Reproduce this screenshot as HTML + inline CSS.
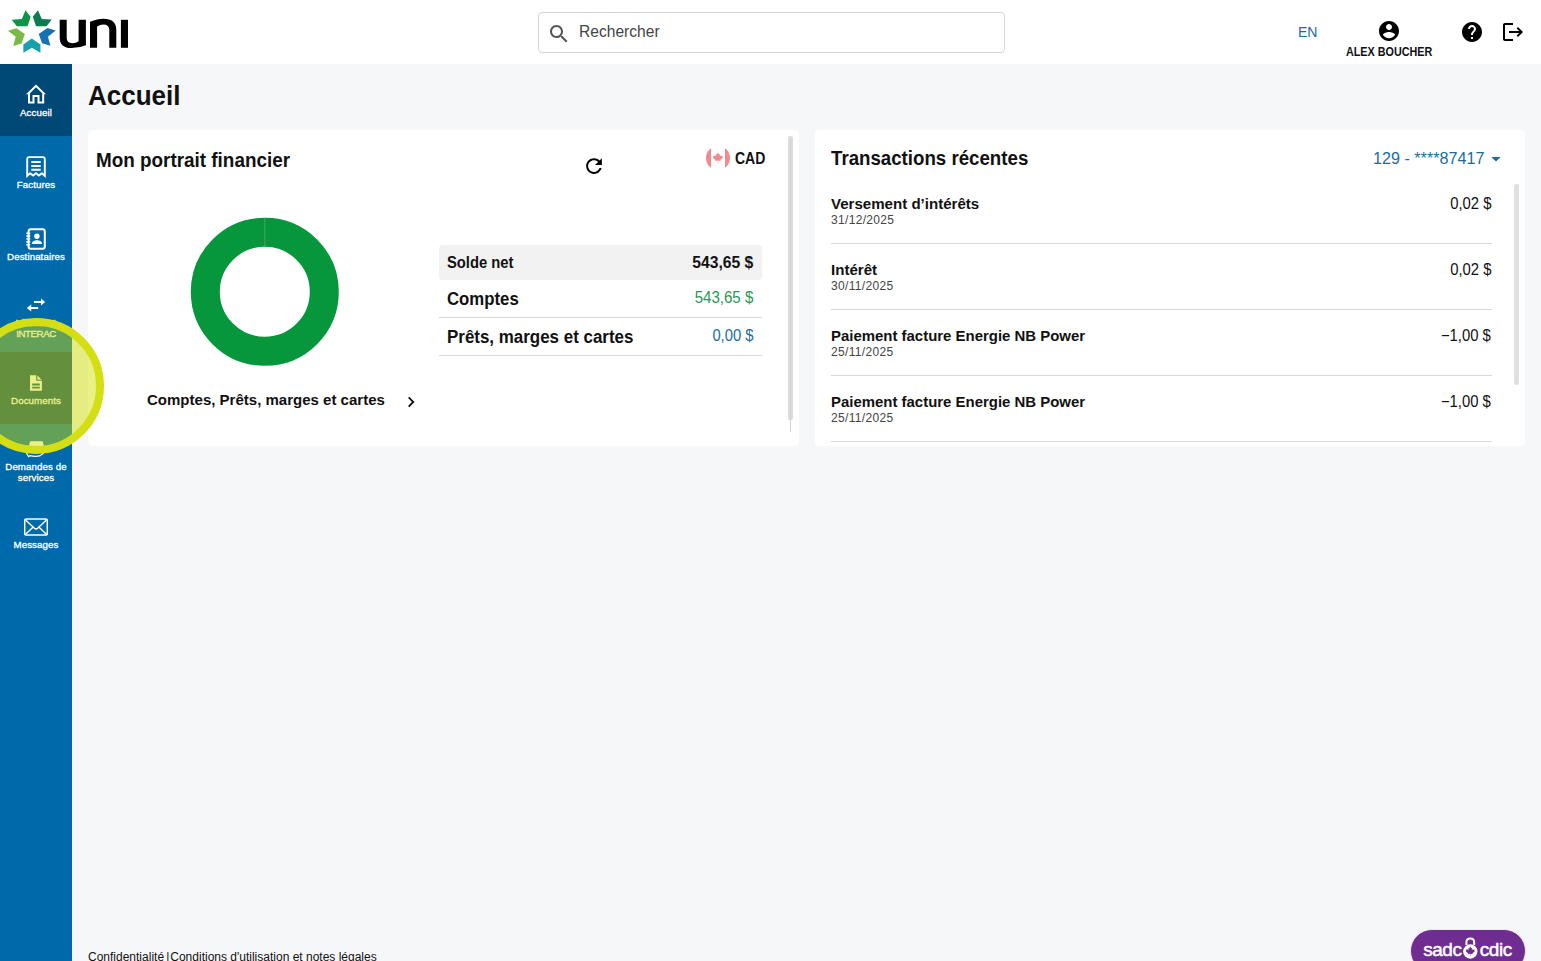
<!DOCTYPE html>
<html lang="fr">
<head>
<meta charset="utf-8">
<title>Accueil</title>
<style>
*{box-sizing:border-box;margin:0;padding:0}
html,body{width:1541px;height:961px;overflow:hidden;background:#f6f7f9;font-family:"Liberation Sans",sans-serif;color:#111}
.abs{position:absolute}
.t{position:absolute;white-space:nowrap;line-height:1}
#header{position:absolute;left:0;top:0;width:1541px;height:64px;background:#fff}
#side{position:absolute;left:0;top:64px;width:72px;height:897px;background:#0069aa}
.nav{position:absolute;left:0;width:72px;height:72px;color:#fff;text-align:center}
.nav .lbl{position:absolute;left:0;width:72px;text-align:center;font-size:9.7px;line-height:11px;letter-spacing:0.1px;color:#fff;-webkit-text-stroke:0.32px #fff}
.nav svg{position:absolute}
.card{position:absolute;background:#fff;border-radius:4.5px}
.b{font-weight:bold}
.hr{position:absolute;height:1px;background:#d9d9d9}
.tn{font-size:15.5px;line-height:18px;transform-origin:left center;transform:scaleX(0.972)}
.td{font-size:12px;line-height:14px;color:#444;letter-spacing:0.33px}
.ta{font-size:16px;line-height:18px;color:#111;transform-origin:right center;transform:scaleX(0.928)}
</style>
</head>
<body>
<div id="header">
<svg class="abs" style="left:0;top:0" width="140" height="64" viewBox="0 0 140 64">
 <g transform="translate(31.8,31.8) scale(1.068,1)">
  <polygon id="chev" points="0,6.8 8.1,12.7 8.1,20.9 0,15.9 -7.9,20.9 -7.9,12.7" fill="#16a0ad"/>
  <polygon points="0,6.8 8.1,12.7 8.1,20.9 0,15.9 -7.9,20.9 -7.9,12.7" fill="#7ab943" transform="rotate(72)"/>
  <polygon points="0,6.8 8.1,12.7 8.1,20.9 0,15.9 -7.9,20.9 -7.9,12.7" fill="#109347" transform="rotate(144)"/>
  <polygon points="0,6.8 8.1,12.7 8.1,20.9 0,15.9 -7.9,20.9 -7.9,12.7" fill="#0c7b50" transform="rotate(216)"/>
  <polygon points="0,6.8 8.1,12.7 8.1,20.9 0,15.9 -7.9,20.9 -7.9,12.7" fill="#1671b5" transform="rotate(288)"/>
 </g>
 <g fill="#000">
  <path d="M59.7 19.8H66.7V38Q66.7 43.2 72.6 43.2Q76 43.2 78.6 41.3V19.8H85.9V45.2Q79 48.1 71.5 48.1Q59.7 48.1 59.7 37.5Z"/>
  <path d="M90 21.7Q97.5 18.7 103.3 18.7Q116.3 18.7 116.3 30V47.8H109.3V30Q109.3 24.4 103.3 24.4Q100 24.4 97.1 26.6V47.8H90Z"/>
  <path d="M120.9 19.8H128V47.8H120.9Z"/>
 </g>
</svg>
<div class="abs" style="left:538px;top:12px;width:467px;height:40.6px;border:1px solid #d6d6d6;border-radius:4px;background:#fff"></div>
<svg class="abs" style="left:546.5px;top:21.5px" width="24" height="24" viewBox="0 0 24 24"><path fill="#555" d="M15.5 14h-.79l-.28-.27C15.41 12.59 16 11.11 16 9.5 16 5.91 13.09 3 9.5 3S3 5.91 3 9.5 5.91 16 9.5 16c1.61 0 3.09-.59 4.23-1.57l.27.28v.79l5 4.99L20.49 19l-4.99-5zm-6 0C7.01 14 5 11.99 5 9.5S7.01 5 9.5 5 14 7.01 14 9.5 11.99 14 9.5 14z"/></svg>
<div class="t" id="srch" style="left:579px;top:23px;font-size:16px;line-height:18px;color:#444;transform-origin:left center;transform:scaleX(0.975)">Rechercher</div>
<div class="t" id="en" style="left:1298px;top:24px;font-size:14px;line-height:16px;color:#1c6c9b">EN</div>
<svg class="abs" style="left:1377px;top:19px" width="24" height="24" viewBox="0 0 24 24"><path fill="#000" d="M12 2C6.48 2 2 6.48 2 12s4.48 10 10 10 10-4.48 10-10S17.52 2 12 2zm0 3c1.66 0 3 1.34 3 3s-1.34 3-3 3-3-1.34-3-3 1.34-3 3-3zm0 14.2c-2.5 0-4.71-1.28-6-3.22.03-1.99 4-3.08 6-3.08 1.99 0 5.97 1.09 6 3.08-1.29 1.94-3.5 3.22-6 3.22z"/></svg>
<div class="t b" id="alex" style="left:1346px;top:45px;font-size:12px;line-height:14px;color:#111;transform-origin:left center;transform:scaleX(0.898)">ALEX BOUCHER</div>
<svg class="abs" style="left:1460px;top:19.7px" width="24" height="24" viewBox="0 0 24 24"><path fill="#000" d="M12 2C6.48 2 2 6.48 2 12s4.48 10 10 10 10-4.48 10-10S17.52 2 12 2zm1 17h-2v-2h2v2zm2.07-7.75l-.9.92C13.45 12.9 13 13.5 13 15h-2v-.5c0-1.1.45-2.1 1.17-2.83l1.24-1.26c.37-.36.59-.86.59-1.41 0-1.1-.9-2-2-2s-2 .9-2 2H8c0-2.21 1.79-4 4-4s4 1.79 4 4c0 .88-.36 1.68-.93 2.25z"/></svg>
<svg class="abs" style="left:1500.8px;top:20px" width="24" height="24" viewBox="0 0 24 24"><path fill="#000" d="M17 7l-1.41 1.41L18.17 11H8v2h10.17l-2.58 2.58L17 17l5-5zM4 5h8V3H4c-1.1 0-2 .9-2 2v14c0 1.1.9 2 2 2h8v-2H4V5z"/></svg>
</div>
<div id="side">
<div class="nav" style="top:0;background:#004876">
 <svg style="left:24px;top:17.8px" width="24" height="24" viewBox="0 0 24 24"><path fill="#fff" fill-rule="evenodd" d="M12 2.5L22 12.3H20.2V21.5H13.5V15H10.5V21.5H4V12.3H2ZM12 5.2L18.2 11.3V19.5H15.5V13H8.5V19.5H6V11.3Z"/></svg>
 <div class="lbl" style="top:42.5px">Accueil</div>
</div>
<div class="nav" style="top:72px">
 <svg style="left:24px;top:18.5px" width="24" height="24" viewBox="0 0 24 24"><path d="M3.2 20.9V4.1Q3.2 2.1 5.2 2.1H18.8Q20.8 2.1 20.8 4.1V20.9L17.9 18.2L14.9 20.6L12 18.2L9.1 20.6L6.1 18.2Z" fill="none" stroke="#fff" stroke-width="1.9" stroke-linejoin="miter"/><path d="M7.3 7H16.7M7.3 10.9H16.7M7.3 14.8H16.7" stroke="#fff" stroke-width="2" fill="none"/></svg>
 <div class="lbl" style="top:42.5px">Factures</div>
</div>
<div class="nav" style="top:144px">
 <svg style="left:24px;top:18.5px" width="24" height="24" viewBox="0 0 24 24"><rect x="4.6" y="2.2" width="16.2" height="19.6" rx="2.2" fill="none" stroke="#fff" stroke-width="2"/><path d="M2.9 6.2H5.6M2.9 9.1H5.6M2.9 12H5.6M2.9 14.9H5.6M2.9 17.8H5.6" stroke="#fff" stroke-width="1.6" stroke-linecap="round"/><circle cx="12.9" cy="9.2" r="2.7" fill="#fff"/><path d="M7.8 16.9C7.8 14.3 10.4 13.2 12.9 13.2S18 14.3 18 16.9Z" fill="#fff"/></svg>
 <div class="lbl" style="top:42.5px">Destinataires</div>
</div>
<div class="nav" style="top:216px">
 <svg style="left:24px;top:13px" width="24" height="24" viewBox="0 0 24 24"><path fill="#fff" d="M10.1 8H17V5.4L21.2 9L17 12.6V10H10.1ZM14.2 14H7.2V11.4L2.8 15L7.2 18.6V16H14.2Z"/></svg>
 <div class="lbl" style="top:37px">Virement<br><span style="letter-spacing:-0.42px">INTERAC</span></div>
</div>
<div class="nav" style="top:288px;background:#004876">
 <svg style="left:24px;top:18.5px" width="24" height="24" viewBox="0 0 24 24"><path fill="#fff" d="M6 4.2H12.2V8.9Q12.2 9.8 13.1 9.8H17.9V19.8H6ZM13.4 4.5L17.6 8.7H13.4ZM8.2 12.6H15.8V14.4H8.2ZM8.2 15.7H15.8V17.5H8.2Z" fill-rule="evenodd"/></svg>
 <div class="lbl" style="top:42.5px">Documents</div>
</div>
<div class="nav" style="top:360px">
 <svg style="left:24px;top:13px" width="24" height="24" viewBox="0 0 24 24"><path d="M6.2 4.3H18.6L20 8.9H4.8Z" fill="#fff"/><path d="M2.3 15.6L4.6 19.8L5.9 18.6Q11 19.9 15.6 18.9L19.6 16.3" fill="none" stroke="#fff" stroke-width="1.2" stroke-linejoin="round"/></svg>
 <div class="lbl" style="top:37px">Demandes de<br>services</div>
</div>
<div class="nav" style="top:432px">
 <svg style="left:24px;top:18.5px" width="24" height="24" viewBox="0 0 24 24"><rect x="0.7" y="3.9" width="22.6" height="16.2" rx="1.6" fill="none" stroke="#fff" stroke-width="1.5"/><path d="M1.6 5L10.4 13.2Q12 14.6 13.6 13.2L22.4 5M1.6 19.2L9.2 12M22.4 19.2L14.8 12" fill="none" stroke="#fff" stroke-width="1.4"/></svg>
 <div class="lbl" style="top:42.5px">Messages</div>
</div>
</div>
<div id="hl" class="abs" style="z-index:10;left:-32px;top:318px;width:136px;height:136px;border-radius:50%;border:8.3px solid #d3df12;background:rgba(208,224,0,0.48)"></div>
<div id="main">
<div class="t b" id="ttl" style="left:88px;top:80.4px;font-size:28px;line-height:32px;transform-origin:left center;transform:scaleX(0.929)">Accueil</div>

<div class="card" style="left:88px;top:130px;width:710.5px;height:316px"></div>
<div class="t b" id="mpf" style="left:96px;top:148.2px;font-size:19.5px;line-height:24px;transform-origin:left center;transform:scaleX(0.968)">Mon portrait financier</div>
<svg class="abs" style="left:582px;top:154.2px" width="24" height="24" viewBox="0 0 24 24"><path fill="#000" transform="translate(12 12.1) scale(0.985) translate(-12 -12)" d="M17.65 6.35C16.2 4.9 14.21 4 12 4c-4.42 0-7.99 3.58-7.99 8s3.57 8 7.99 8c3.73 0 6.84-2.55 7.73-6h-2.08c-.82 2.33-3.04 4-5.65 4-3.31 0-6-2.69-6-6s2.69-6 6-6c1.66 0 3.14.69 4.22 1.78L13 11h7V4l-2.35 2.35z"/></svg>
<svg class="abs" style="left:705px;top:145px" width="26" height="26" viewBox="0 0 26 26">
 <defs><clipPath id="fc"><circle cx="13" cy="12.9" r="12"/></clipPath></defs>
 <g clip-path="url(#fc)" fill="#ef8a90">
  <rect x="0" y="0" width="6.1" height="26"/>
  <rect x="20" y="0" width="6" height="26"/>
  <path transform="translate(13 13) scale(0.84) translate(-12.8 -11.2)" d="M12.8 4.6l1.2 2.3 1.3-.6-.6 3.2 1.6-1.7.4 1 1.9-.4-.7 2.1.8.5-3.2 2.6.4 1.2-3-.5v2.6h-.5v-2.6l-3 .5.4-1.2-3.2-2.6.8-.5-.7-2.1 1.9.4.4-1 1.6 1.7-.6-3.2 1.3.6z"/>
 </g>
</svg>
<div class="t b" id="cad" style="left:734.5px;top:149.6px;font-size:16px;line-height:18px;transform-origin:left center;transform:scaleX(0.875)">CAD</div>

<svg class="abs" style="left:190px;top:217px" width="150" height="150" viewBox="0 0 150 150"><circle cx="74.8" cy="74.8" r="59.5" fill="none" stroke="#06963b" stroke-width="29"/><rect x="74.4" y="0.8" width="0.9" height="29" fill="#3fae68"/></svg>
<div class="t b" id="cpmc" style="left:146.5px;top:390.5px;font-size:15px;line-height:18px;transform-origin:left center;transform:scaleX(1.001)">Comptes, Prêts, marges et cartes</div>
<svg class="abs" style="left:398.7px;top:389.5px" width="24" height="24" viewBox="0 0 24 24"><path fill="#000" transform="translate(12 12) scale(0.86) translate(-12 -12)" d="M10 6L8.59 7.41 13.17 12l-4.58 4.59L10 18l6-6z"/></svg>

<div class="abs" style="left:439px;top:245px;width:323px;height:35px;background:#f2f2f2;border-radius:4px"></div>
<div class="t b" id="sn" style="left:447px;top:254.1px;font-size:16px;line-height:18px;transform-origin:left center;transform:scaleX(0.923)">Solde net</div>
<div class="t b" id="snv" style="right:788px;top:254.1px;font-size:16px;line-height:18px;transform-origin:right center;transform:scaleX(0.979)">543,65 $</div>
<div class="t b" id="cpt" style="left:447px;top:288px;font-size:18px;line-height:22px;transform-origin:left center;transform:scaleX(0.931)">Comptes</div>
<div class="t" id="cptv" style="right:787.5px;top:289px;font-size:16px;line-height:18px;color:#2d9556;transform-origin:right center;transform:scaleX(0.941)">543,65 $</div>
<div class="hr" style="left:439px;top:317px;width:323px"></div>
<div class="t b" id="pmc" style="left:447px;top:326px;font-size:18px;line-height:22px;transform-origin:left center;transform:scaleX(0.941)">Prêts, marges et cartes</div>
<div class="t" id="pmcv" style="right:787.5px;top:327px;font-size:16px;line-height:18px;color:#1c6c9b;transform-origin:right center;transform:scaleX(0.924)">0,00 $</div>
<div class="hr" style="left:439px;top:355px;width:323px"></div>
<div class="abs" style="left:788.3px;top:136px;width:4.5px;height:284px;background:#dcdcdc;border-radius:2px"></div>
<div class="abs" style="left:790px;top:138px;width:1px;height:294px;background:#d2d2d2"></div>

<div class="card" style="left:815px;top:130px;width:710px;height:316px;overflow:hidden"></div>
<div class="t b" id="tr" style="left:830.6px;top:146.2px;font-size:19.5px;line-height:24px;transform-origin:left center;transform:scaleX(0.958)">Transactions récentes</div>
<div class="t" id="acct" style="left:1373px;top:150px;font-size:16px;line-height:18px;color:#1c6c9b;transform-origin:left center;transform:scaleX(1.01)">129 - ****87417</div>
<svg class="abs" style="left:1483.5px;top:147.3px" width="24" height="24" viewBox="0 0 24 24"><path fill="#1c6c9b" d="M7.4 10l4.6 4.6 4.6-4.6z"/></svg>

<div class="t b tn" style="left:831px;top:194.5px">Versement d’intérêts</div>
<div class="t td" style="left:831px;top:213px">31/12/2025</div>
<div class="t ta" style="right:49.7px;top:194.7px">0,02 $</div>
<div class="hr" style="left:831px;top:243px;width:661px"></div>

<div class="t b tn" style="left:831px;top:260.5px">Intérêt</div>
<div class="t td" style="left:831px;top:279px">30/11/2025</div>
<div class="t ta" style="right:49.7px;top:260.7px">0,02 $</div>
<div class="hr" style="left:831px;top:309px;width:661px"></div>

<div class="t b tn" style="left:831px;top:326.5px;transform:scaleX(0.964)">Paiement facture Energie NB Power</div>
<div class="t td" style="left:831px;top:345px">25/11/2025</div>
<div class="t ta" style="right:49.7px;top:326.7px">−1,00 $</div>
<div class="hr" style="left:831px;top:375px;width:661px"></div>

<div class="t b tn" style="left:831px;top:392.5px;transform:scaleX(0.964)">Paiement facture Energie NB Power</div>
<div class="t td" style="left:831px;top:411px">25/11/2025</div>
<div class="t ta" style="right:49.7px;top:392.7px">−1,00 $</div>
<div class="hr" style="left:831px;top:441px;width:661px"></div>
<div class="abs" style="left:1514px;top:184px;width:5px;height:201px;background:#e0e0e0;border-radius:2.5px"></div>

<div class="t" id="foot" style="left:88px;top:949.5px;font-size:12px;line-height:14px;color:#111">Confidentialité<span style="margin:0 1px 0 2.1px">|</span>Conditions d'utilisation et notes légales</div>
<div class="abs" style="left:1409.8px;top:928.6px;width:116.4px;height:44px;border-radius:22px;background:#6f2c91;border:1.6px solid #f3e4f7"></div>
<div class="t" id="sadc" style="left:1423.2px;top:938.7px;font-size:19px;line-height:22px;color:#fff;letter-spacing:-0.45px;-webkit-text-stroke:0.5px #fff">sadc</div>
<div class="t" id="cdic" style="left:1479.8px;top:938.7px;font-size:19px;line-height:22px;color:#fff;letter-spacing:-0.45px;-webkit-text-stroke:0.5px #fff">cdic</div>
<svg class="abs" style="left:1461px;top:936.3px" width="19" height="26" viewBox="0 0 19 26"><path d="M5.4 9V6.4Q5.4 2.6 9.3 2.6T13.2 6.4V9" fill="none" stroke="#fff" stroke-width="2"/><circle cx="9.3" cy="15.5" r="7.2" fill="#fff"/><path fill="#6f2c91" d="M9.3 10.6l.9 1.7 1-.5-.4 2.4 1.2-1.2.3.7 1.4-.3-.5 1.6.6.4-2.4 1.9.3.9-2.2-.4v2h-.4v-2l-2.2.4.3-.9-2.4-1.9.6-.4-.5-1.6 1.4.3.3-.7 1.2 1.2-.4-2.4 1 .5z"/></svg>
</div>
</body>
</html>
